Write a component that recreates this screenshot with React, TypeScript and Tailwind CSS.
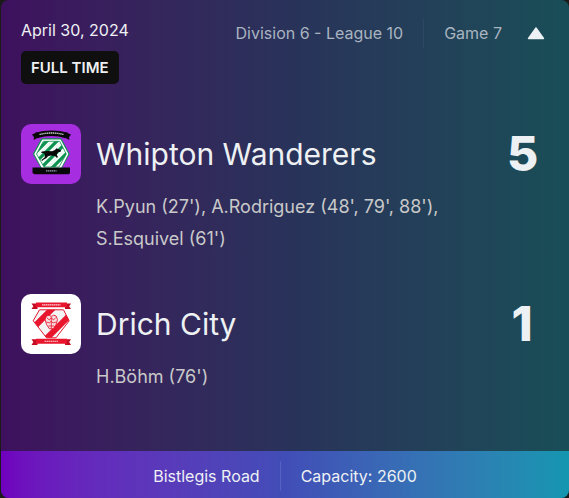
import clsx from 'clsx'
import type { ReactNode } from 'react'

interface ITeam {
    name: string
    score: number
    scorers: string[]
    crest: ReactNode
    crestClass: string
}

const WhiptonCrest = () => (
    <svg viewBox="0 0 60 60" className="size-full" aria-hidden="true">
        <defs>
            <clipPath id="whipton-shield">
                <path d="M22.3 17.3h16.4L45.3 30 38 43H23l-7.5-13z" />
            </clipPath>
        </defs>
        <path d="M20.5 14.2h19.8L48.7 30l-8.4 15H20.5L11.8 30z" fill="#0d9150" />
        <path d="M21.3 15.4h18.3L47.4 30 39.6 45H21.3L13.2 30z" fill="#fff" />
        <path d="M22.3 17.3h16.4L45.3 30 38 43H23l-7.5-13z" fill="#eefaf4" />
        <g clipPath="url(#whipton-shield)" stroke="#0d9150" strokeWidth="3.2">
            <path d="M10 33 31 12M13 40 40 13M18 46 47 17M27 48 50 25" />
        </g>
        <path
            d="M22.3 17.3h16.4L45.3 30 38 43H23l-7.5-13z"
            fill="none"
            stroke="#0d9150"
            strokeWidth="0.8"
        />
        <path
            d="M21 27.6l6-.6 4 .2 3-1.2 1.5-1.7 1.5.7 3 1.2-.4 1.5-2.6.5-1.3 2.8 1.2 1.8-.9 1.2-2-2-4.1-.5-3 .8-1.3 1.8-3.6 2-1 1.2-.6-1.2 3.2-2.6.3-2.3-.6-1.8-3.4-.8z"
            fill="#080808"
        />
        <path
            d="M11 10.6l5.4-2.4 1.2 5-5 2.8.4-2.8zM50 10.6l-5.4-2.4-1.2 5 5 2.8-.4-2.8z"
            fill="#080808"
        />
        <path d="M14 8.7Q30.5 4.1 47 8.7l-2.2 5.6Q30.5 9.9 16.2 14.3z" fill="#080808" />
        <path d="M18.5 10.4Q30.5 7.6 42.5 10.4" fill="none" stroke="#c8c8c8" strokeWidth="1.4" strokeDasharray="1.4 .5" />
        <path d="M11.5 43.5H49V49l-1 1.2H13.5l-2-1.2z" fill="#080808" />
        <path d="M25 46.8h10.5" stroke="#9ea2b4" strokeWidth="1.3" strokeDasharray="1.4 .5" />
    </svg>
)

const DrichCrest = () => (
    <svg viewBox="0 0 60 60" className="size-full" aria-hidden="true">
        <defs>
            <clipPath id="drich-shield">
                <path d="M18.5 15.8h24l5.7 11L35 43.8h-9.5L12.2 26.8z" />
            </clipPath>
        </defs>
        <g clipPath="url(#drich-shield)">
            <path d="M10 14h40v31H10z" fill="#f3f3f4" />
            <path d="M8 38 34 12M20 50 52 18" stroke="#e8152c" strokeWidth="6" />
        </g>
        <path
            d="M18.5 15.8h24l5.7 11L35 43.8h-9.5L12.2 26.8z"
            fill="none"
            stroke="#e8152c"
            strokeWidth="1"
        />
        <path
            d="M25.5 22l2.5-.8 2.3 1.2 2.3-1.2 2.5.8 1.4 3.6-1.4 4.8-2.8 4.3h-4l-2.8-4.3-1.4-4.8z"
            fill="#f8dcdf"
            stroke="#e8152c"
            strokeWidth="0.9"
        />
        <path
            d="M26 24l2.3 2 2-2.5 2 2.5 2.3-2M25.5 28l3 1 1.8-2 1.8 2 3-1M27.5 32h5.6M30.3 23.5V34"
            fill="none"
            stroke="#e8152c"
            strokeWidth="0.8"
        />
        <path d="M10.5 9.5h6V15h-6l1.8-2.7zM50 9.5h-6V15h6l-1.8-2.7z" fill="#c40d23" />
        <path d="M10.5 45.2h6V51h-6l1.8-2.9zM50 45.2h-6V51h6l-1.8-2.9z" fill="#c40d23" />
        <path d="M15 8.5h31v4.7H15zM15 44.8h31v5H15z" fill="#e8152c" />
        <path d="M21 10.9h18.5M23.5 47.3h14" stroke="#fbd5d9" strokeWidth="1.1" strokeDasharray="1.6 .4" />
    </svg>
)

const teams: ITeam[] = [
    {
        name: 'Whipton Wanderers',
        score: 5,
        scorers: ["K.Pyun (27')", "A.Rodriguez (48', 79', 88')", "S.Esquivel (61')"],
        crest: <WhiptonCrest />,
        crestClass: 'bg-[#a62de0]',
    },
    {
        name: 'Drich City',
        score: 1,
        scorers: ["H.Böhm (76')"],
        crest: <DrichCrest />,
        crestClass: 'bg-white',
    },
]

const Divider = ({ className }: { className: string }) => (
    <div className={clsx('h-[30px] w-px', className)}></div>
)

const TeamRow = ({ name, score, scorers, crest, crestClass }: ITeam) => (
    <section className="grid grid-cols-[60px_1fr_auto] items-center gap-x-[15px]">
        <div className={clsx('size-[60px] overflow-hidden rounded-[10px]', crestClass)}>{crest}</div>
        <h2 className="text-[30px] leading-10">{name}</h2>
        <div className="w-[30px] text-center text-5xl font-extrabold">{score}</div>
        <p className="col-start-2 mt-[7px] text-lg leading-8 text-[#c9c9c9]">
            {scorers.join(', ')}
        </p>
    </section>
)

const App = () => {
    return (
        <main className="min-h-screen bg-[#1a1a1a] pl-px font-['Inter',sans-serif] text-[#eef1f3]">
            <article className="overflow-hidden rounded-lg bg-linear-to-r from-[#3e105e] via-[#29325a] to-[#184e57]">
                <header className="flex items-start justify-between pt-[18px] pr-6 pl-5">
                    <div className="flex flex-col items-start gap-[9px]">
                        <time dateTime="2024-04-30" className="text-base leading-6">
                            April 30, 2024
                        </time>
                        <span className="rounded-[5px] bg-[#0f0f0f] px-[10px] text-[15px] leading-[33px] font-semibold">
                            FULL TIME
                        </span>
                    </div>
                    <div className="flex items-center gap-5 text-base text-[#a9b4c0]">
                        <span>Division 6 - League 10</span>
                        <Divider className="bg-[#2b4764]" />
                        <span>Game 7</span>
                        <button type="button" aria-label="Collapse match" className="pl-[5px]">
                            <svg width="18" height="14" viewBox="0 0 18 14" aria-hidden="true">
                                <path
                                    d="M9 2l7.5 10.5h-15z"
                                    fill="#eef1f3"
                                    stroke="#eef1f3"
                                    strokeWidth="1.4"
                                    strokeLinejoin="round"
                                />
                            </svg>
                        </button>
                    </div>
                </header>
                <div className="flex flex-col gap-[39px] pt-10 pr-8 pb-[58px] pl-5">
                    {teams.map((team) => (
                        <TeamRow key={team.name} {...team} />
                    ))}
                </div>
                <footer className="flex items-center justify-center gap-5 bg-linear-to-r from-[#7000be] via-[#414db7] to-[#1396b0] pt-[10px] pb-[7px] text-base">
                    <span>Bistlegis Road</span>
                    <Divider className="bg-[#5560c0]" />
                    <span>Capacity: 2600</span>
                </footer>
            </article>
        </main>
    )
}

export default App
